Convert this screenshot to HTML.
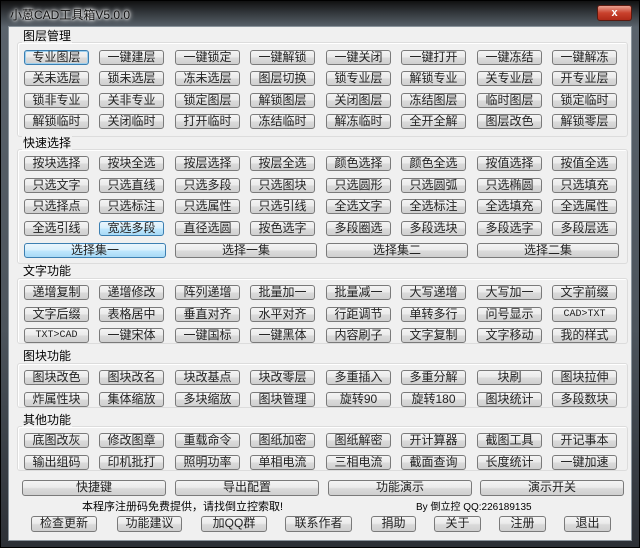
<!DOCTYPE html>
<html><head><meta charset="utf-8"><style>
*{margin:0;padding:0;box-sizing:border-box}
body{width:640px;height:548px;overflow:hidden;background:#222;font-family:"Liberation Sans","Noto Sans CJK SC","WenQuanYi Zen Hei",sans-serif;font-size:12px;position:relative}
.frame{position:absolute;left:0;top:0;width:640px;height:548px;background:linear-gradient(180deg,#111 0,#2e3236 10px,#5a636c 26px,#4c545c 60%,#2c3036 100%);border:1px solid #000}
.title{position:absolute;left:10px;top:6px;color:#111;font-size:12px;text-shadow:0 0 6px #fff,0 0 4px #fff,0 0 2px #fff}
.close{position:absolute;left:597px;top:5px;width:35px;height:16px;border:1px solid #5a1a10;border-radius:3px;background:linear-gradient(#e8a090,#c9412c 50%,#b02a18);color:#fff;font-size:11px;font-weight:bold;text-align:center;line-height:14px}
.client{position:absolute;left:8px;top:26px;width:624px;height:515px;background:#f0f0f0;border:1px solid #8a949c}
.g{position:absolute;border:1px solid #dcdcdc;border-radius:3px;box-shadow:inset 1px 1px 0 #fff}
.lb{position:absolute;left:22px;font-size:12px;color:#000;background:#f0f0f0;padding:0 1px;line-height:14px}
.b{position:absolute;width:65px;height:15px;border:1px solid #7a7a7a;border-radius:3px;background:linear-gradient(#f4f4f4,#ebebeb 45%,#dadada 55%,#cfcfcf);text-align:center;font-size:12px;line-height:13px;color:#222;white-space:nowrap}
.h{background:linear-gradient(#eaf6fd,#d9f0fc 45%,#bee6fd 55%,#a7d9f5);border-color:#3c7fb1}
.f{border-color:#3c7fb1;box-shadow:inset 0 0 0 1px #9fd0ee}
.w{width:142px}
.m{font-family:"Liberation Mono",monospace;font-size:10px}
.t{position:absolute;font-size:11px;color:#000;white-space:nowrap}
</style></head><body>
<div class="frame"></div>
<div class="title">小蒽CAD工具箱V5.0.0</div>
<div class="close">x</div>
<div class="client"></div>

<div class="g" style="left:17px;top:42px;width:611px;height:95px"></div>
<div class="g" style="left:17px;top:149px;width:611px;height:115px"></div>
<div class="g" style="left:17px;top:278px;width:611px;height:66px"></div>
<div class="g" style="left:17px;top:363px;width:611px;height:45px"></div>
<div class="g" style="left:17px;top:426px;width:611px;height:45px"></div>

<div class="lb" style="top:29px">图层管理</div>
<div class="lb" style="top:136px">快速选择</div>
<div class="lb" style="top:264px">文字功能</div>
<div class="lb" style="top:349px">图块功能</div>
<div class="lb" style="top:413px">其他功能</div>

<div class="b f" style="left:24px;top:50px">专业图层</div><div class="b" style="left:99px;top:50px">一键建层</div><div class="b" style="left:175px;top:50px">一键锁定</div><div class="b" style="left:250px;top:50px">一键解锁</div><div class="b" style="left:326px;top:50px">一键关闭</div><div class="b" style="left:401px;top:50px">一键打开</div><div class="b" style="left:477px;top:50px">一键冻结</div><div class="b" style="left:552px;top:50px">一键解冻</div>
<div class="b" style="left:24px;top:71px">关未选层</div><div class="b" style="left:99px;top:71px">锁未选层</div><div class="b" style="left:175px;top:71px">冻未选层</div><div class="b" style="left:250px;top:71px">图层切换</div><div class="b" style="left:326px;top:71px">锁专业层</div><div class="b" style="left:401px;top:71px">解锁专业</div><div class="b" style="left:477px;top:71px">关专业层</div><div class="b" style="left:552px;top:71px">开专业层</div>
<div class="b" style="left:24px;top:93px">锁非专业</div><div class="b" style="left:99px;top:93px">关非专业</div><div class="b" style="left:175px;top:93px">锁定图层</div><div class="b" style="left:250px;top:93px">解锁图层</div><div class="b" style="left:326px;top:93px">关闭图层</div><div class="b" style="left:401px;top:93px">冻结图层</div><div class="b" style="left:477px;top:93px">临时图层</div><div class="b" style="left:552px;top:93px">锁定临时</div>
<div class="b" style="left:24px;top:114px">解锁临时</div><div class="b" style="left:99px;top:114px">关闭临时</div><div class="b" style="left:175px;top:114px">打开临时</div><div class="b" style="left:250px;top:114px">冻结临时</div><div class="b" style="left:326px;top:114px">解冻临时</div><div class="b" style="left:401px;top:114px">全开全解</div><div class="b" style="left:477px;top:114px">图层改色</div><div class="b" style="left:552px;top:114px">解锁零层</div>

<div class="b" style="left:24px;top:156px">按块选择</div><div class="b" style="left:99px;top:156px">按块全选</div><div class="b" style="left:175px;top:156px">按层选择</div><div class="b" style="left:250px;top:156px">按层全选</div><div class="b" style="left:326px;top:156px">颜色选择</div><div class="b" style="left:401px;top:156px">颜色全选</div><div class="b" style="left:477px;top:156px">按值选择</div><div class="b" style="left:552px;top:156px">按值全选</div>
<div class="b" style="left:24px;top:178px">只选文字</div><div class="b" style="left:99px;top:178px">只选直线</div><div class="b" style="left:175px;top:178px">只选多段</div><div class="b" style="left:250px;top:178px">只选图块</div><div class="b" style="left:326px;top:178px">只选圆形</div><div class="b" style="left:401px;top:178px">只选圆弧</div><div class="b" style="left:477px;top:178px">只选椭圆</div><div class="b" style="left:552px;top:178px">只选填充</div>
<div class="b" style="left:24px;top:199px">只选择点</div><div class="b" style="left:99px;top:199px">只选标注</div><div class="b" style="left:175px;top:199px">只选属性</div><div class="b" style="left:250px;top:199px">只选引线</div><div class="b" style="left:326px;top:199px">全选文字</div><div class="b" style="left:401px;top:199px">全选标注</div><div class="b" style="left:477px;top:199px">全选填充</div><div class="b" style="left:552px;top:199px">全选属性</div>
<div class="b" style="left:24px;top:221px">全选引线</div><div class="b h" style="left:99px;top:221px">宽选多段</div><div class="b" style="left:175px;top:221px">直径选圆</div><div class="b" style="left:250px;top:221px">按色选字</div><div class="b" style="left:326px;top:221px">多段圈选</div><div class="b" style="left:401px;top:221px">多段选块</div><div class="b" style="left:477px;top:221px">多段选字</div><div class="b" style="left:552px;top:221px">多段层选</div>
<div class="b w h" style="left:24px;top:243px">选择集一</div><div class="b w" style="left:175px;top:243px">选择一集</div><div class="b w" style="left:326px;top:243px">选择集二</div><div class="b w" style="left:477px;top:243px">选择二集</div>

<div class="b" style="left:24px;top:285px">递增复制</div><div class="b" style="left:99px;top:285px">递增修改</div><div class="b" style="left:175px;top:285px">阵列递增</div><div class="b" style="left:250px;top:285px">批量加一</div><div class="b" style="left:326px;top:285px">批量减一</div><div class="b" style="left:401px;top:285px">大写递增</div><div class="b" style="left:477px;top:285px">大写加一</div><div class="b" style="left:552px;top:285px">文字前缀</div>
<div class="b" style="left:24px;top:307px">文字后缀</div><div class="b" style="left:99px;top:307px">表格居中</div><div class="b" style="left:175px;top:307px">垂直对齐</div><div class="b" style="left:250px;top:307px">水平对齐</div><div class="b" style="left:326px;top:307px">行距调节</div><div class="b" style="left:401px;top:307px">单转多行</div><div class="b" style="left:477px;top:307px">问号显示</div><div class="b m" style="left:552px;top:307px">CAD&gt;TXT</div>
<div class="b m" style="left:24px;top:328px">TXT&gt;CAD</div><div class="b" style="left:99px;top:328px">一键宋体</div><div class="b" style="left:175px;top:328px">一键国标</div><div class="b" style="left:250px;top:328px">一键黑体</div><div class="b" style="left:326px;top:328px">内容刷子</div><div class="b" style="left:401px;top:328px">文字复制</div><div class="b" style="left:477px;top:328px">文字移动</div><div class="b" style="left:552px;top:328px">我的样式</div>

<div class="b" style="left:24px;top:370px">图块改色</div><div class="b" style="left:99px;top:370px">图块改名</div><div class="b" style="left:175px;top:370px">块改基点</div><div class="b" style="left:250px;top:370px">块改零层</div><div class="b" style="left:326px;top:370px">多重插入</div><div class="b" style="left:401px;top:370px">多重分解</div><div class="b" style="left:477px;top:370px">块刷</div><div class="b" style="left:552px;top:370px">图块拉伸</div>
<div class="b" style="left:24px;top:392px">炸属性块</div><div class="b" style="left:99px;top:392px">集体缩放</div><div class="b" style="left:175px;top:392px">多块缩放</div><div class="b" style="left:250px;top:392px">图块管理</div><div class="b" style="left:326px;top:392px">旋转90</div><div class="b" style="left:401px;top:392px">旋转180</div><div class="b" style="left:477px;top:392px">图块统计</div><div class="b" style="left:552px;top:392px">多段数块</div>

<div class="b" style="left:24px;top:433px">底图改灰</div><div class="b" style="left:99px;top:433px">修改图章</div><div class="b" style="left:175px;top:433px">重载命令</div><div class="b" style="left:250px;top:433px">图纸加密</div><div class="b" style="left:326px;top:433px">图纸解密</div><div class="b" style="left:401px;top:433px">开计算器</div><div class="b" style="left:477px;top:433px">截图工具</div><div class="b" style="left:552px;top:433px">开记事本</div>
<div class="b" style="left:24px;top:455px">输出组码</div><div class="b" style="left:99px;top:455px">印机批打</div><div class="b" style="left:175px;top:455px">照明功率</div><div class="b" style="left:250px;top:455px">单相电流</div><div class="b" style="left:326px;top:455px">三相电流</div><div class="b" style="left:401px;top:455px">截面查询</div><div class="b" style="left:477px;top:455px">长度统计</div><div class="b" style="left:552px;top:455px">一键加速</div>

<div class="b" style="left:22px;top:480px;width:144px;height:16px">快捷键</div><div class="b" style="left:175px;top:480px;width:144px;height:16px">导出配置</div><div class="b" style="left:328px;top:480px;width:144px;height:16px">功能演示</div><div class="b" style="left:480px;top:480px;width:144px;height:16px">演示开关</div>
<div class="t" style="left:82px;top:498px">本程序注册码免费提供，请找倒立控索取!</div>
<div class="t" style="left:416px;top:498px;font-size:10px">By 倒立控 QQ:226189135</div>
<div class="b" style="left:31px;top:516px;width:66px;height:16px">检查更新</div><div class="b" style="left:117px;top:516px;width:65px;height:16px">功能建议</div><div class="b" style="left:201px;top:516px;width:66px;height:16px">加QQ群</div><div class="b" style="left:285px;top:516px;width:67px;height:16px">联系作者</div><div class="b" style="left:371px;top:516px;width:45px;height:16px">捐助</div><div class="b" style="left:434px;top:516px;width:47px;height:16px">关于</div><div class="b" style="left:499px;top:516px;width:47px;height:16px">注册</div><div class="b" style="left:564px;top:516px;width:47px;height:16px">退出</div>
</body></html>
